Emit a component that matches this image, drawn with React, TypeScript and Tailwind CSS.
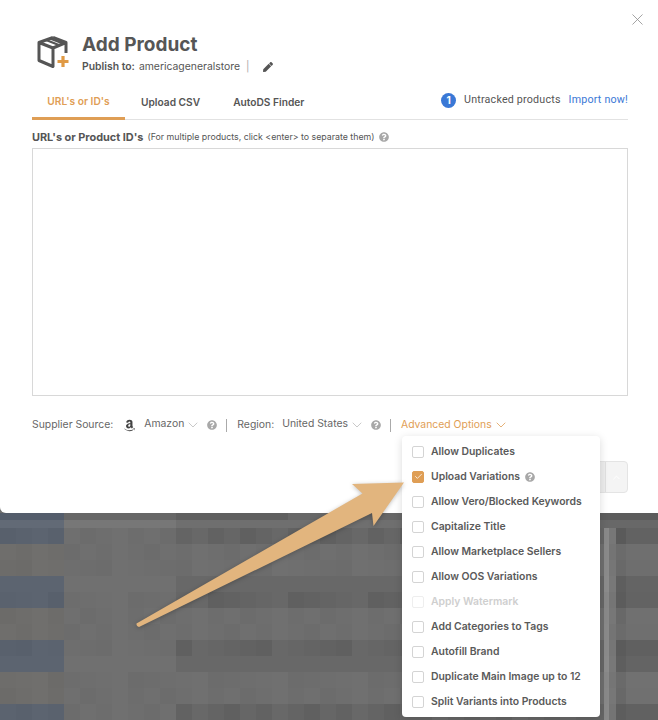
import { FaAmazon, FaPen, FaQuestionCircle } from 'react-icons/fa';
import { FiCheck, FiChevronDown, FiChevronUp, FiX } from 'react-icons/fi';

const options = [
  { label: 'Allow Duplicates' },
  { label: 'Upload Variations', checked: true, help: true },
  { label: 'Allow Vero/Blocked Keywords' },
  { label: 'Capitalize Title' },
  { label: 'Allow Marketplace Sellers' },
  { label: 'Allow OOS Variations' },
  { label: 'Apply Watermark', disabled: true },
  { label: 'Add Categories to Tags' },
  { label: 'Autofill Brand' },
  { label: 'Duplicate Main Image up to 12' },
  { label: 'Split Variants into Products' },
];

// blurred page behind the modal
const mosaicColor = (c: number, r: number) => {
  if (r === 0) return c < 4 ? '#545d6b' : c > 36 ? '#5c5c5c' : c > 10 && c < 18 ? '#5f5f5f' : '#676767';
  if (r === 1) return c < 4 ? '#626a76' : c < 11 ? '#777777' : c > 36 ? '#686868' : '#6f6f6f';
  const y = r - 2;
  const blue = (y + 1) % 4 < 2;
  const wobble = (c * 7 + y * 13 + c * y) % 5;
  const v = (base: number) => {
    const n = base + wobble * (c >= 11 && c < 37 && blue ? 2 : 1) - 2;
    return `rgb(${n},${n},${n})`;
  };
  if (c < 4) return blue ? `rgb(${88 + wobble},${96 + wobble},${108 + wobble})` : `rgb(${108 + wobble},${107 + wobble},${105 + wobble})`;
  if (c === 37) return v(blue ? 100 : 108);
  if (c === 38) return v(138);
  if (c === 39) return v(118);
  if (c === 40) return v(blue ? 92 : 106);
  if (c === 41) return v(blue ? 98 : 112);
  if (c >= 11 && c < 26) return v(blue ? 98 : 110);
  if (c >= 26) return v(blue ? 102 : 112);
  return v(110);
};

const rows = Array.from({ length: 15 }, (_, r) => r);
const cols = Array.from({ length: 43 }, (_, c) => c);

const Help = ({ className }: { className: string }) => (
  <FaQuestionCircle size={10} className={`text-[#a8a8a8] ${className}`} />
);

export default function App() {
  return (
    <div className="relative w-[658px] h-[720px] overflow-hidden bg-[#6e6e6e] font-['Inter',sans-serif] text-[#555]">
      {/* Modal */}
      <div className="relative z-10 h-[513px] bg-white rounded-bl-md pl-8 pr-[30px] pt-[36px]">
        <FiX size={19} strokeWidth={1} className="absolute top-[10px] right-[11px] text-[#8c8c8c]" />

        <div className="flex pl-1 h-[38px]">
          <svg width="36" height="34" viewBox="0 0 36 34" fill="none" className="shrink-0">
            <path d="M17 1.5 30 6.5V17M17 1.500 3 6.500V24.500L17 30.500V19M3 6.500 17 12 30 6.500M17 12V21" stroke="#555" strokeWidth="3" strokeLinejoin="round" />
            <path d="M10 4 23.500 9.300M14 2.500 27 7.500" stroke="#555" strokeWidth="2.200" />
            <path d="M27 20v11M21.500 25.500h11" stroke="#e09a45" strokeWidth="3.200" />
          </svg>
          <div className="ml-[10px]">
            <h1 className="text-[19px] leading-[18px] font-bold text-[#565656]">Add Product</h1>
            <div className="flex items-center mt-[5px] text-[10.4px] leading-[16px]">
              <span className="font-semibold">Publish to:</span>
              <span className="ml-1">americageneralstore</span>
              <span className="ml-[6px] text-[#aaa]">|</span>
              <FaPen size={10} className="ml-[13px] text-[#555]" />
            </div>
          </div>
        </div>

        <div className="flex items-center h-[38px] mt-[8px] border-b border-[#e2e2e2] text-[10.2px] font-semibold">
          <div className="w-[93px] h-[38px] flex items-center justify-center text-[#df9e55] border-b-[3px] border-[#df9e55] pt-[5px]">URL's or ID's</div>
          <div className="ml-[16px] pt-[4px]">Upload CSV</div>
          <div className="ml-[33px] pt-[4px]">AutoDS Finder</div>
          <div className="ml-auto flex items-center font-normal">
            <span className="w-[15px] h-[15px] rounded-full bg-[#3a78d6] text-white text-[10px] font-bold flex items-center justify-center">1</span>
            <span className="ml-2 font-['Roboto',sans-serif] text-[10.7px] tracking-[0.2px]">Untracked products</span>
            <span className="ml-2 font-['Roboto',sans-serif] text-[10.7px] tracking-[0.2px] text-[#3a78d6]">Import now!</span>
          </div>
        </div>

        <div className="flex items-center h-[16px] mt-[9px]">
          <span className="text-[10.9px] font-bold">URL's or Product ID's</span>
          <span className="ml-1 text-[8.8px]">(For multiple products, click &lt;enter&gt; to separate them)</span>
          <Help className="ml-[4px]" />
        </div>

        <div className="h-[248px] mt-[3px] border border-[#d8d8d8]" />

        <div className="flex items-center h-[16px] mt-[21px] text-[10.4px] text-[#666]">
          <span>Supplier Source:</span>
          <FaAmazon size={13} className="ml-[10px] text-[#444]" />
          <span className="ml-2 -mt-[2px]">Amazon</span>
          <FiChevronDown size={16} strokeWidth={0.8} className="ml-px text-[#999]" />
          <Help className="ml-[6px]" />
          <span className="ml-[9px] w-px h-[13px] bg-[#aaa]" />
          <span className="ml-[10px]">Region:</span>
          <span className="ml-2 -mt-[2px]">United States</span>
          <FiChevronDown size={16} strokeWidth={0.8} className="ml-px text-[#999]" />
          <Help className="ml-[6px]" />
          <span className="ml-[9px] w-px h-[13px] bg-[#aaa]" />
          <span className="ml-[10px] text-[#df9e55]">Advanced Options</span>
          <FiChevronDown size={16} strokeWidth={1.2} className="ml-px text-[#df9e55]" />
        </div>

        {/* Footer buttons, mostly covered by the dropdown */}
        <div className="flex justify-end mt-[28px]">
          <div className="flex h-[32px] w-[64px] rounded-r border border-[#e4e4e4] bg-[#f4f4f4]">
            <div className="flex-1 bg-[#ededed] border-r border-[#e0e0e0]" />
            <div className="w-[21px] flex items-center justify-center">
              <FiChevronUp size={11} className="text-white" />
            </div>
          </div>
        </div>
      </div>

      {/* Blurred background */}
      <div className="grid grid-cols-[repeat(37,16px)_12px_5px_7px_10px_16px_16px] grid-rows-[7px_8px_repeat(13,16px)]">
        {rows.map((r) =>
          cols.map((c) => (
            <div key={`${r}-${c}`} style={{ backgroundColor: mosaicColor(Math.min(c, 41), r) }} />
          ))
        )}
      </div>

      {/* Advanced options dropdown */}
      <div className="absolute z-20 left-[402px] top-[436px] w-[198px] h-[281px] bg-white rounded shadow-[0_2px_8px_rgba(0,0,0,0.15)] pl-[10px] pt-[3px] text-[10.4px] font-semibold">
        {options.map((o) => (
          <div key={o.label} className={`flex items-center h-[25px] ${o.disabled ? 'text-[#cfcfcf]' : 'text-[#5a5a5a]'}`}>
            <span
              className={`w-[12px] h-[12px] rounded-[2px] border flex items-center justify-center ${
                o.checked ? 'bg-[#df9e55] border-[#df9e55]' : o.disabled ? 'border-[#eeeeee]' : 'border-[#d4d4d4]'
              }`}
            >
              {o.checked && <FiCheck size={9} className="text-white" />}
            </span>
            <span className="ml-[7px]">{o.label}</span>
            {o.help && <Help className="ml-[5px]" />}
          </div>
        ))}
      </div>

      {/* Annotation arrow */}
      <svg width="658" height="720" viewBox="0 0 658 720" className="absolute z-30 inset-0 drop-shadow-[0_1px_2px_rgba(0,0,0,0.25)]">
        <path
          d="M404 482.500 352 484 362.500 493.500 136.500 623.500Q136 626 139 627L372 513 373.500 526Z"
          fill="#e2b57e"
        />
      </svg>
    </div>
  );
}
